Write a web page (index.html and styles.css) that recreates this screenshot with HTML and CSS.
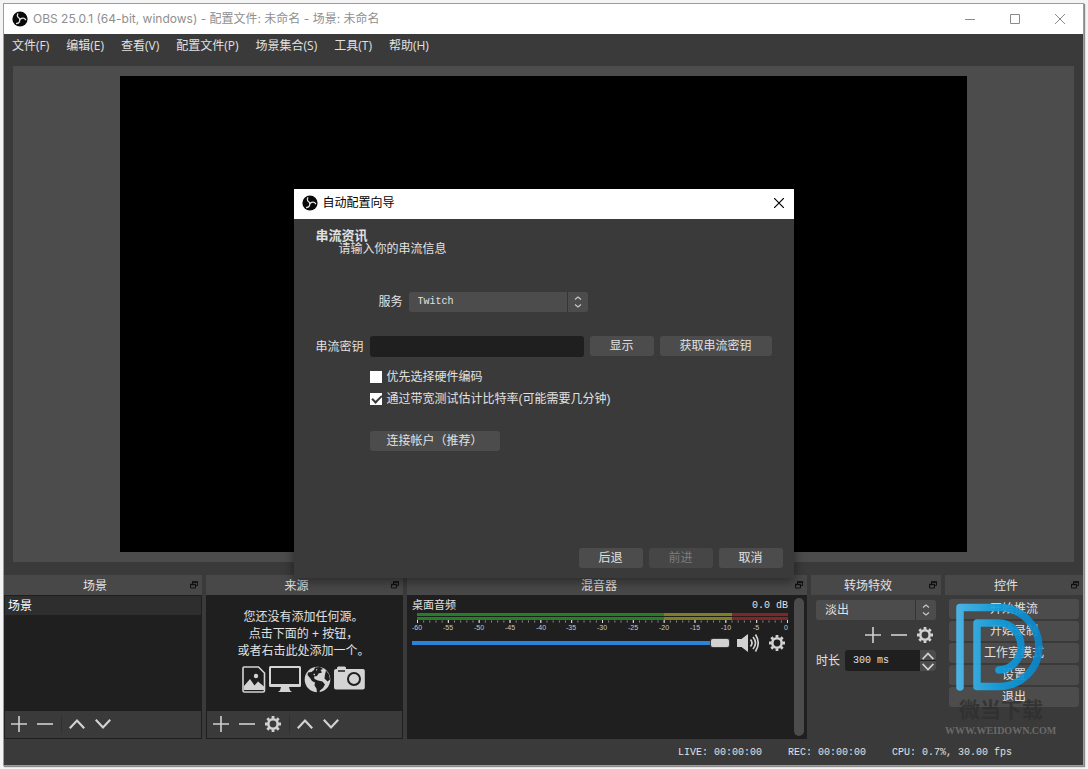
FILE: index.html
```html
<!DOCTYPE html>
<html lang="zh-CN">
<head>
<meta charset="utf-8">
<title>OBS 25.0.1</title>
<link rel="stylesheet" href="styles.css">
</head>
<body>
<svg class="defs" aria-hidden="true">
  <symbol id="obs" viewBox="0 0 16 16">
    <circle cx="8" cy="8" r="7.600" fill="#0a0a0a"/>
    <g fill="none" stroke="#e4e4e4" stroke-width="1.300" stroke-linecap="round">
      <path d="M8 7.600C6 7 4.600 5 5.800 2.800"/>
      <path d="M8 7.600C6 7 4.600 5 5.800 2.800" transform="rotate(120 8 8)"/>
      <path d="M8 7.600C6 7 4.600 5 5.800 2.800" transform="rotate(240 8 8)"/>
    </g>
  </symbol>
  <symbol id="plus" viewBox="0 0 16 16"><path d="M8 0v16M0 8h16" stroke="#d0d0d0" stroke-width="1.600"/></symbol>
  <symbol id="minus" viewBox="0 0 16 16"><path d="M0 8h16" stroke="#d0d0d0" stroke-width="1.600"/></symbol>
  <symbol id="up" viewBox="0 0 16 16"><path d="M.8 12.200L8 4.600l7.200 7.600" fill="none" stroke="#d2d2d2" stroke-width="2.200"/></symbol>
  <symbol id="down" viewBox="0 0 16 16"><path d="M.8 3.800L8 11.400l7.200-7.600" fill="none" stroke="#d2d2d2" stroke-width="2.200"/></symbol>
  <symbol id="gear" viewBox="0 0 16 16">
    <circle cx="8" cy="8" r="4.700" fill="none" stroke="#d2d2d2" stroke-width="2.600"/>
    <path d="M8 0v2.600M8 13.400V16M0 8h2.600M13.400 8H16M2.350 2.350l1.800 1.800M11.850 11.850l1.800 1.800M2.350 13.650l1.800-1.800M11.850 4.150l1.800-1.800" stroke="#d2d2d2" stroke-width="2.800"/>
  </symbol>
  <symbol id="float" viewBox="0 0 8 8">
    <path d="M2.500 3V1h5v3.500H6M.5 3.500h5v3.500h-5z" fill="none" stroke="#111"/><path d="M2 1h6M0 3.500h6" stroke="#111" stroke-width="1.500"/>
  </symbol>
  <symbol id="pair" viewBox="0 0 8 12"><path d="M1 3.500l3-2.500 3 2.500M1 8.500L4 11l3-2.500" fill="none" stroke="#c8c8c8" stroke-width="1.200"/></symbol>
</svg>

<div class="window">
  <header class="titlebar">
    <svg class="logo"><use href="#obs"/></svg>
    <h1 class="title">OBS 25.0.1 (64-bit, windows) - 配置文件: 未命名 - 场景: 未命名</h1>
    <div class="winbtns">
      <button class="winbtn" aria-label="最小化"><svg viewBox="0 0 10 10"><path d="M0 5.500h10" stroke="#8a8a8a"/></svg></button>
      <button class="winbtn" aria-label="最大化"><svg viewBox="0 0 10 10"><path d="M.5.5h9v9h-9z" fill="none" stroke="#8a8a8a"/></svg></button>
      <button class="winbtn" aria-label="关闭"><svg viewBox="0 0 10 10"><path d="M0 0l10 10M10 0L0 10" stroke="#8a8a8a"/></svg></button>
    </div>
  </header>
  <nav class="menubar">
    <button class="menu">文件(F)</button><button class="menu">编辑(E)</button><button class="menu">查看(V)</button><button class="menu">配置文件(P)</button><button class="menu">场景集合(S)</button><button class="menu">工具(T)</button><button class="menu">帮助(H)</button>
  </nav>

  <main class="preview"><div class="canvas"></div></main>

  <div class="docks">
    <section class="dock">
      <header class="dock-head"><h2 class="dock-title">场景</h2><button class="float" aria-label="浮动"><svg><use href="#float"/></svg></button></header>
      <div class="panel">
        <ul class="list"><li class="item">场景</li></ul>
        <div class="tools">
          <button class="tool" aria-label="添加"><svg><use href="#plus"/></svg></button>
          <button class="tool" aria-label="移除"><svg><use href="#minus"/></svg></button>
          <span class="sep"></span>
          <button class="tool" aria-label="上移"><svg><use href="#up"/></svg></button>
          <button class="tool" aria-label="下移"><svg><use href="#down"/></svg></button>
        </div>
      </div>
    </section>

    <section class="dock">
      <header class="dock-head"><h2 class="dock-title">来源</h2><button class="float" aria-label="浮动"><svg><use href="#float"/></svg></button></header>
      <div class="panel">
        <div class="empty">
          <p class="hint">您还没有添加任何源。<br>点击下面的 + 按钮，<br>或者右击此处添加一个。</p>
          <div class="kinds">
            <svg width="24" height="27" viewBox="0 0 24 27"><path d="M2 1h14.500L22.500 7v17.500a1.500 1.500 0 0 1-1.500 1.500H2.500A1.500 1.500 0 0 1 1 24.500V2a1 1 0 0 1 1-1z" fill="none" stroke="#d4d4d4" stroke-width="1.600"/><circle cx="14" cy="10" r="2.200" fill="#d4d4d4"/><path d="M2 24v-4l6-7 4.500 6.500L16 15.500l6 5V24z" fill="#d4d4d4"/></svg>
            <svg width="32" height="27" viewBox="0 0 32 27"><path d="M1.500 0h29A1.500 1.500 0 0 1 32 1.500v18a1.500 1.500 0 0 1-1.500 1.500H20l1 3.500 2 1.500H9l2-1.500 1-3.500H1.500A1.500 1.500 0 0 1 0 19.500v-18A1.500 1.500 0 0 1 1.500 0zM2 2v16h28V2z" fill="#d4d4d4" fill-rule="evenodd"/></svg>
            <svg width="27" height="27" viewBox="0 0 27 27"><circle cx="13.500" cy="13.500" r="12.800" fill="#d4d4d4"/><path d="M11 1.500L16 1l3 2-2.500 1 1.500 2.500-3.500 1-1.500 2.500-3 .5.500 2.500 3.500 1.500 4.500 1 2.500 3-2 3.500-3 2.500-1 3-2-.5-.5-4.500-2-3 .5-3-3-1.500L6 12l-2.500-3L4 6.500 7.500 6 10 4z" fill="#1f1f1f"/><path d="M22 4.500l3 4 1 5-2.500 2-3-3 .5-4z" fill="#1f1f1f"/><path d="M12 3l1.500.5L12.500 5zM9 8.500l2-1v2z" fill="#d4d4d4"/></svg>
            <svg width="31" height="25" viewBox="0 0 31 25"><path d="M3 3V2a1.500 1.500 0 0 1 1.500-1.500h6A1.500 1.500 0 0 1 12 2v1h17a1.800 1.800 0 0 1 1.800 1.800v16.700a2 2 0 0 1-2 2H2a2 2 0 0 1-2-2V5a2 2 0 0 1 2-2z" fill="#d4d4d4"/><path d="M4 5h7" stroke="#1f1f1f" stroke-width="1.500"/><circle cx="20" cy="13" r="6" fill="none" stroke="#1f1f1f" stroke-width="2"/></svg>
          </div>
        </div>
        <div class="tools">
          <button class="tool" aria-label="添加"><svg><use href="#plus"/></svg></button>
          <button class="tool" aria-label="移除"><svg><use href="#minus"/></svg></button>
          <button class="tool" aria-label="属性"><svg><use href="#gear"/></svg></button>
          <span class="sep"></span>
          <button class="tool" aria-label="上移"><svg><use href="#up"/></svg></button>
          <button class="tool" aria-label="下移"><svg><use href="#down"/></svg></button>
        </div>
      </div>
    </section>

    <section class="dock">
      <header class="dock-head"><h2 class="dock-title">混音器</h2><button class="float" aria-label="浮动"><svg><use href="#float"/></svg></button></header>
      <div class="panel mixer">
        <div class="channel">
          <div class="channel-head"><label for="vol">桌面音频</label><output class="mono">0.0 dB</output></div>
          <div class="meter"></div>
          <div class="meter"></div>
          <svg class="scale" viewBox="0 0 376 13">
            <path d="M5 1.500h371" stroke="#8c8c8c" stroke-width="2" stroke-dasharray="1 5.167"/>
            <path d="M5 1.500h371" stroke="#e0e0e0" stroke-width="3" stroke-dasharray="1 29.833"/>
            <g class="scale-text">
              <text x="5" y="10">-60</text><text x="36" y="10">-55</text><text x="67" y="10">-50</text><text x="98" y="10">-45</text><text x="129" y="10">-40</text><text x="159" y="10">-35</text><text x="190" y="10">-30</text><text x="221" y="10">-25</text><text x="252" y="10">-20</text><text x="283" y="10">-15</text><text x="314" y="10">-10</text><text x="344" y="10">-5</text><text x="374" y="10">0</text>
            </g>
          </svg>
          <div class="volume">
            <input id="vol" class="slider" type="range" min="0" max="100" value="100">
            <button class="icon-btn" aria-label="静音"><svg width="24" height="20" viewBox="0 0 24 20"><path d="M0 6h4.500L11 1v18l-6.500-5H0z" fill="#d2d2d2"/><path d="M13.500 6.500q3 3.500 0 7M16 4q5 6 0 12M18.500 1.500q5.500 8.500 0 17" fill="none" stroke="#d2d2d2" stroke-width="1.700"/></svg></button>
            <button class="icon-btn" aria-label="设置"><svg width="16" height="16"><use href="#gear"/></svg></button>
          </div>
        </div>
        <div class="scrollbar"></div>
      </div>
    </section>

    <section class="dock">
      <header class="dock-head"><h2 class="dock-title">转场特效</h2><button class="float" aria-label="浮动"><svg><use href="#float"/></svg></button></header>
      <div class="transitions">
        <div class="combo"><select class="select" aria-label="转场特效"><option>淡出</option></select><svg class="arrows"><use href="#pair"/></svg></div>
        <div class="trans-tools">
          <button class="tool" aria-label="添加"><svg><use href="#plus"/></svg></button>
          <button class="tool" aria-label="移除"><svg><use href="#minus"/></svg></button>
          <button class="tool" aria-label="设置"><svg><use href="#gear"/></svg></button>
        </div>
        <div class="duration">
          <label for="dur">时长</label>
          <div class="spin">
            <input id="dur" class="spin-input mono" type="text" value="300 ms">
            <div class="spin-btns">
              <button class="spin-btn" aria-label="增加"><svg><use href="#up"/></svg></button>
              <button class="spin-btn" aria-label="减少"><svg><use href="#down"/></svg></button>
            </div>
          </div>
        </div>
      </div>
    </section>

    <section class="dock controls-dock">
      <header class="dock-head"><h2 class="dock-title">控件</h2><button class="float" aria-label="浮动"><svg><use href="#float"/></svg></button></header>
      <div class="controls">
        <button class="btn">开始推流</button>
        <button class="btn">开始录制</button>
        <button class="btn">工作室模式</button>
        <button class="btn">设置</button>
        <button class="btn">退出</button>
      </div>
      <div class="mark">
        <svg width="88" height="88" viewBox="0 0 88 88">
          <defs><linearGradient id="blue" gradientUnits="userSpaceOnUse" x1="0" y1="44" x2="88" y2="44"><stop offset="0" stop-color="#4dbdf0"/><stop offset=".5" stop-color="#109fe0"/><stop offset="1" stop-color="#0a83c8"/></linearGradient></defs>
          <path d="M4 84V4.500H43A40 39.500 0 0 1 43 83.500H21V20H43A22 23.500 0 0 1 43 67" fill="none" stroke="url(#blue)" stroke-width="7.500" stroke-linecap="round" stroke-linejoin="round"/>
        </svg>
        <div class="mark-name">微当下载</div>
        <div class="mark-url">WWW.WEIDOWN.COM</div>
      </div>
    </section>
  </div>

  <footer class="status mono"><span>LIVE: 00:00:00</span><span>REC: 00:00:00</span><span>CPU: 0.7%, 30.00 fps</span></footer>

  <div class="dialog" role="dialog" aria-labelledby="dlg-title">
    <header class="dialog-bar">
      <svg class="logo"><use href="#obs"/></svg>
      <h2 class="dialog-title" id="dlg-title">自动配置向导</h2>
      <button class="dialog-close" aria-label="关闭"><svg width="10" height="10" viewBox="0 0 10 10"><path d="M0 0l10 10M10 0L0 10" stroke="#000" stroke-width="1.200"/></svg></button>
    </header>
    <form class="form">
      <h3 class="form-title">串流资讯</h3>
      <p class="form-sub">请输入你的串流信息</p>
      <div class="service">
        <label for="svc">服务</label>
        <div class="combo"><select id="svc" class="select mono"><option>Twitch</option></select><svg class="arrows"><use href="#pair"/></svg></div>
      </div>
      <div class="keyrow">
        <label for="key" class="key-label">串流密钥</label>
        <input id="key" class="key" type="password">
        <button type="button" class="btn small">显示</button>
        <button type="button" class="btn wide">获取串流密钥</button>
      </div>
      <div class="options">
        <label class="check"><input class="box" type="checkbox">优先选择硬件编码</label>
        <label class="check"><input class="box" type="checkbox" checked>通过带宽测试估计比特率(可能需要几分钟)</label>
        <button type="button" class="btn connect">连接帐户（推荐）</button>
      </div>
      <div class="dialog-foot">
        <button type="button" class="btn small">后退</button>
        <button type="button" class="btn small" disabled>前进</button>
        <button type="button" class="btn small">取消</button>
      </div>
    </form>
  </div>
</div>
</body>
</html>
```

FILE: styles.css
```css
* { box-sizing: border-box; }
body {
  margin: 0;
  padding: 3px 4px 3px 3px;
  min-height: 100vh;
  display: flex;
  background: #f4f4f4;
  color: #e1e1e1;
  font: 12px/16px "Liberation Sans", "Noto Sans CJK SC", sans-serif;
}
h1, h2, h3, p, ul { margin: 0; padding: 0; font-size: inherit; font-weight: normal; }
button, input, select { font: inherit; color: inherit; border: 0; margin: 0; padding: 0; background: none; }
svg { display: block; }
.defs { position: absolute; width: 0; height: 0; }
.mono { font-family: "Liberation Mono", "Noto Sans CJK SC", monospace; font-size: 10px; }

.window {
  position: relative;
  flex: 1;
  display: flex;
  flex-direction: column;
  background: #3a3a3a;
  border: 1px solid #9c9c9c;
  box-shadow: 1px 1px 1px #8a8a8a;
}
.titlebar { display: flex; align-items: center; height: 30px; padding: 0 1px 0 8px; background: #fff; color: #8f8f8f; }
.logo { width: 16px; height: 16px; }
.title { flex: 1; margin-left: 5px; font-family: Inter, "Noto Sans CJK SC", sans-serif; }
.winbtns { display: flex; }
.winbtn { width: 45px; height: 28px; display: grid; place-items: center; }
.winbtn svg { width: 10px; height: 10px; }

.menubar { display: flex; gap: 17px; height: 32px; padding: 4px 8px 12px; font-family: "Open Sans", "Noto Sans CJK SC", sans-serif; }
.menu { line-height: 16px; white-space: nowrap; }

.preview { flex: 1; min-height: 200px; margin: 0 9px 13px; padding: 10px; background: #4c4c4c; display: flex; justify-content: center; }
.canvas { aspect-ratio: 16 / 9; background: #000; }

.docks { display: grid; grid-template-columns: 198fr 197fr 400fr 130fr 138fr; gap: 4px; }
.dock { display: flex; flex-direction: column; min-width: 0; min-height: 164px; }
.dock-head { display: flex; align-items: center; height: 20px; background: #484848; }
.dock-title { flex: 1; text-align: center; line-height: 20px; padding-top: 1px; }
.float { width: 16px; height: 16px; display: grid; place-items: center; }
.float svg { width: 8px; height: 8px; }
.panel { flex: 1; display: flex; flex-direction: column; padding: 1px; background: #1f1f1f; }
.list { flex: 1; list-style: none; }
.item { height: 19px; padding-left: 3px; line-height: 20px; background: #2e2e2e; color: #fff; }
.tools { display: flex; align-items: center; gap: 10px; height: 27px; padding: 0 0 2px 6px; background: #3a3a3a; }
.tool { width: 16px; height: 16px; }
.tool svg { width: 16px; height: 16px; }
.sep { width: 1px; height: 18px; margin: 0 -3px 0 -2px; background: #303030; }
.empty { flex: 1; display: flex; flex-direction: column; align-items: center; gap: 6px; padding: 13px 2px 0 0; }
.hint { text-align: center; line-height: 17px; }
.kinds { display: flex; gap: 3px; }

.mixer { flex-direction: row; gap: 6px; padding: 3px 3px 3px 5px; }
.channel { flex: 1; min-width: 0; }
.channel-head { display: flex; justify-content: space-between; height: 15px; line-height: 15px; font-size: 11px; }
.meter { height: 3px; margin: 0 0 1px 5px; background: linear-gradient(90deg, #267f26 66.6%, #7f7f26 66.6% 85%, #7f2626 85%); }
.meter + .meter { margin-bottom: 0; }
.scale { width: 100%; overflow: visible; }
.scale-text { font-size: 7px; fill: #c8c8c8; text-anchor: middle; }
.volume { display: flex; align-items: center; gap: 8px; height: 20px; padding-right: 3px; }
.slider { flex: 1; min-width: 0; height: 10px; appearance: none; background: linear-gradient(#2a82da, #2a82da) center / 100% 4px no-repeat; }
.slider::-webkit-slider-thumb { appearance: none; width: 18px; height: 8px; border-radius: 2px; background: #d2d2d2; box-shadow: 0 0 0 1px #3a3a3a; }
.scrollbar { width: 10px; border-radius: 5px; background: #4c4c4c; }

.combo { position: relative; }
.select { appearance: none; display: block; width: 100%; height: 20px; padding-left: 9px; border-radius: 3px; background: linear-gradient(90deg, #4c4c4c calc(100% - 21px), #343434 calc(100% - 21px) calc(100% - 20px), #4c4c4c calc(100% - 20px)); }
.arrows { position: absolute; right: 6px; top: 4px; width: 8px; height: 12px; pointer-events: none; }
.transitions { padding: 5px; }
.trans-tools { display: flex; justify-content: flex-end; gap: 10px; padding: 7px 3px; }
.duration { display: flex; align-items: center; gap: 5px; white-space: nowrap; }
.spin { flex: 1; min-width: 0; display: flex; height: 21px; border-radius: 3px; overflow: hidden; background: #1f1f1f; }
.spin-input { flex: 1; min-width: 0; padding-left: 8px; }
.spin-btns { display: grid; grid-template-rows: 10px 10px; gap: 1px; width: 16px; }
.spin-btn { display: grid; place-items: center; background: #4c4c4c; overflow: hidden; }
.spin-btn svg { width: 12px; height: 12px; }

.btn { height: 20px; border-radius: 3px; background: #4c4c4c; text-align: center; line-height: 20px; white-space: nowrap; }
.btn:disabled { color: #7c7c7c; background: #464646; }
.controls-dock { position: relative; }
.controls { display: grid; gap: 2px; padding: 4px; }
.mark { position: absolute; left: 0; top: 28px; width: 110px; pointer-events: none; }
.mark svg { margin-left: 11px; opacity: .92; }
.mark-name { margin: 9px 0 0 14px; color: #303030; font-size: 21px; line-height: 20px; font-weight: bold; white-space: nowrap; opacity: .8; }
.mark-url { margin-top: 5px; color: #6a6a6a; font: bold 10px/12px "Liberation Serif", serif; white-space: nowrap; }

.status { display: flex; justify-content: flex-end; gap: 26px; height: 26px; line-height: 28px; padding-right: 71px; }

.dialog { position: absolute; inset: 0 0 2px; margin: auto; width: 500px; height: max-content; background: #3a3a3a; box-shadow: 0 3px 10px 1px rgba(0, 0, 0, .4); }
.dialog-bar { display: flex; align-items: center; height: 30px; padding: 0 10px 2px 8px; background: #fff; color: #000; }
.dialog-title { flex: 1; margin-left: 5px; }
.dialog-close { padding: 0; }
.form { display: flex; flex-direction: column; padding: 11px 11px 10px 22px; }
.form-title { font-size: 13px; font-weight: bold; line-height: 12px; }
.form-sub { margin-left: 23px; line-height: 14px; }
.service { display: flex; align-items: center; gap: 6px; margin: 36px 0 0 63px; }
.service .combo { width: 179px; }
.keyrow { display: flex; align-items: flex-start; gap: 6px; margin: 24px 11px 0 0; }
.key-label { line-height: 22px; }
.key { flex: 1; min-width: 0; height: 21px; border-radius: 3px; background: #1f1f1f; }
.small { width: 64px; }
.wide { width: 112px; }
.options { display: flex; flex-direction: column; align-items: flex-start; gap: 6px; margin: 11px 0 0 54px; }
.check { display: flex; align-items: center; gap: 5px; }
.box { appearance: none; width: 12px; height: 12px; background: #fff; }
.box:checked::before { content: ""; display: block; width: 8px; height: 4px; margin: 2px; border: solid #3a3a3a; border-width: 0 0 2px 2px; transform: rotate(-45deg); }
.connect { width: 130px; margin-top: 18px; }
.dialog-foot { display: flex; justify-content: flex-end; gap: 6px; margin-top: 97px; }
```
